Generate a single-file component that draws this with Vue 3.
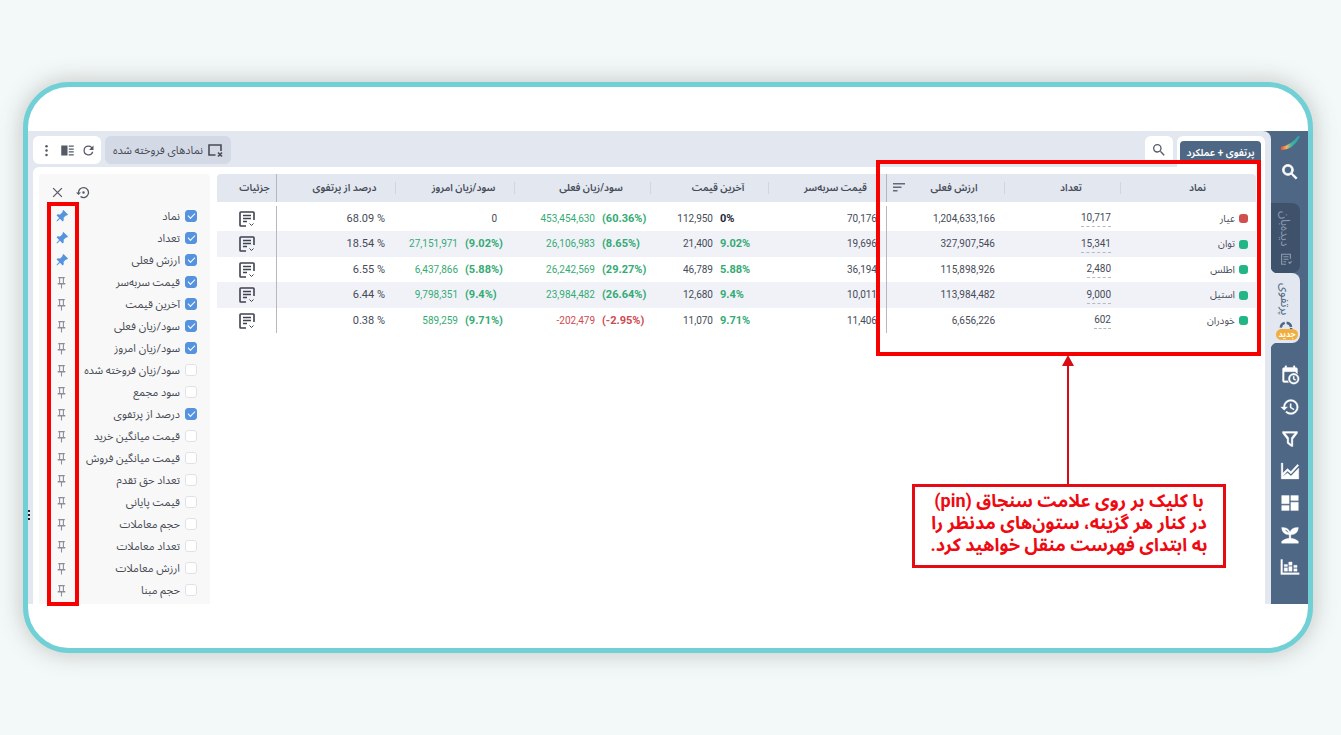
<script setup>
import { ref } from 'vue'

const columns = [
  { label: 'نماد', cls: 'c-symbol' },
  { label: 'تعداد', cls: 'c-count' },
  { label: 'ارزش فعلی', cls: 'c-value', sorted: true },
  { label: 'قیمت سربه‌سر', cls: 'c-even' },
  { label: 'آخرین قیمت', cls: 'c-last' },
  { label: 'سود/زیان فعلی', cls: 'c-profit' },
  { label: 'سود/زیان امروز', cls: 'c-today' },
  { label: 'درصد از پرتفوی', cls: 'c-share' },
  { label: 'جزئیات', cls: 'c-detail' }
]

const rows = [
  { name: 'عیار', dot: 'down', count: '10,717', value: '1,204,633,166', even: '70,176', last: '112,950', lastPct: '0%', lastTone: 'flat', profit: '453,454,630', profitPct: '(60.36%)', profitTone: 'up', today: '0', todayPct: '', todayTone: 'plain', share: '68.09 %' },
  { name: 'توان', dot: 'up', count: '15,341', value: '327,907,546', even: '19,696', last: '21,400', lastPct: '9.02%', lastTone: 'up', profit: '26,106,983', profitPct: '(8.65%)', profitTone: 'up', today: '27,151,971', todayPct: '(9.02%)', todayTone: 'up', share: '18.54 %' },
  { name: 'اطلس', dot: 'up', count: '2,480', value: '115,898,926', even: '36,194', last: '46,789', lastPct: '5.88%', lastTone: 'up', profit: '26,242,569', profitPct: '(29.27%)', profitTone: 'up', today: '6,437,866', todayPct: '(5.88%)', todayTone: 'up', share: '6.55 %' },
  { name: 'استیل', dot: 'up', count: '9,000', value: '113,984,482', even: '10,011', last: '12,680', lastPct: '9.4%', lastTone: 'up', profit: '23,984,482', profitPct: '(26.64%)', profitTone: 'up', today: '9,798,351', todayPct: '(9.4%)', todayTone: 'up', share: '6.44 %' },
  { name: 'خودران', dot: 'up', count: '602', value: '6,656,226', even: '11,406', last: '11,070', lastPct: '9.71%', lastTone: 'up', profit: '-202,479', profitPct: '(-2.95%)', profitTone: 'down', today: '589,259', todayPct: '(9.71%)', todayTone: 'up', share: '0.38 %' }
]

const options = ref([
  { label: 'نماد', on: true, pinned: true },
  { label: 'تعداد', on: true, pinned: true },
  { label: 'ارزش فعلی', on: true, pinned: true },
  { label: 'قیمت سربه‌سر', on: true, pinned: false },
  { label: 'آخرین قیمت', on: true, pinned: false },
  { label: 'سود/زیان فعلی', on: true, pinned: false },
  { label: 'سود/زیان امروز', on: true, pinned: false },
  { label: 'سود/زیان فروخته شده', on: false, pinned: false },
  { label: 'سود مجمع', on: false, pinned: false },
  { label: 'درصد از پرتفوی', on: true, pinned: false },
  { label: 'قیمت میانگین خرید', on: false, pinned: false },
  { label: 'قیمت میانگین فروش', on: false, pinned: false },
  { label: 'تعداد حق تقدم', on: false, pinned: false },
  { label: 'قیمت پایانی', on: false, pinned: false },
  { label: 'حجم معاملات', on: false, pinned: false },
  { label: 'تعداد معاملات', on: false, pinned: false },
  { label: 'ارزش معاملات', on: false, pinned: false },
  { label: 'حجم مبنا', on: false, pinned: false }
])

const tools = [
  { label: 'تقویم', d: 'M19 3h-1V1h-2v2H8V1H6v2H5C3.900 3 3 3.900 3 5v14c0 1.100.9 2 2 2h5.300a8 8 0 0 1-1.100-2H5V8h14v1.200c.7.300 1.400.600 2 1.100V5c0-1.100-.9-2-2-2zM16.500 10a6.500 6.500 0 1 0 0 13 6.500 6.500 0 0 0 0-13zm0 11a4.500 4.500 0 1 1 0-9 4.500 4.500 0 0 1 0 9zm.6-7.500h-1.400v3.500l2.600 1.600.7-1.100-1.900-1.200z' },
  { label: 'تاریخچه', d: 'M13 3a9 9 0 0 0-9 9H1l3.890 3.890.07.140L9 12H6c0-3.870 3.130-7 7-7s7 3.130 7 7-3.130 7-7 7c-1.930 0-3.680-.79-4.940-2.060l-1.420 1.420A8.954 8.954 0 0 0 13 21a9 9 0 0 0 0-18zm-1 5v5l4.280 2.540.72-1.210-3.500-2.080V8H12z' },
  { label: 'فیلتر', d: 'M3 3h18v2.200l-5.500 7V21h-2L8.500 17v-4.800L3 5.200zm3.200 2 4.300 5.600V16l3 2.500v-7.900L17.800 5z' },
  { label: 'نمودار', d: 'M1.500 2.500h2v12L9 9l4 3.500L21 4l1.500 1.300-9.300 10.200-4.200-3.500L3.500 18v.3L9 14.500l4.200 3.500L22.500 8.500v13h-21z' },
  { label: 'داشبورد', d: 'M2 3h9v10H2zM13 3h9v6h-9zM13 11h9v10h-9zM2 15h9v6H2z' },
  { label: 'رشد', d: 'M2 3c5.500-.3 9 2 10 5.500C13 5 16.500 2.700 22 3c-.2 5.300-3.300 8.500-9 8.700V16c3 .2 6 1.300 9 3.500V22H2v-2.500C5 17.300 8 16.200 11 16v-4.300C5.300 11.500 2.200 8.300 2 3zm4 2.300c1 2 2.500 3.300 4.500 4C9.800 7.300 8.300 6 6 5.300z' },
  { label: 'آمار', d: 'M1 3h2v16h20v2H1zM5 13h4v4H5zM5 9h4v2.500H5zM10.500 6h4v4h-4zM10.500 11.500h4v5.500h-4zM16.500 14h4v3h-4zM16.500 10h4v2.500h-4z' }
]
</script>

<template>
  <div class="page" dir="rtl">
    <div class="frame">
      <div class="app">
        <nav class="rail">
          <svg class="logo" viewBox="0 0 22 16" aria-hidden="true">
            <defs>
              <linearGradient id="swoosh" x1="0" y1="0" x2="1" y2="0">
                <stop offset="0" stop-color="#e5503c" />
                <stop offset=".3" stop-color="#f3b45c" />
                <stop offset=".55" stop-color="#3fb5a4" />
                <stop offset="1" stop-color="#27a0a8" />
              </linearGradient>
            </defs>
            <path d="M1 12Q12 11 20 0l2 1Q15 15 1 16z" fill="url(#swoosh)" />
          </svg>
          <button class="rail-btn search" aria-label="جستجو">
            <svg viewBox="0 0 24 24"><path d="M15.500 14h-.79l-.28-.27A6.470 6.470 0 0 0 16 9.500 6.500 6.500 0 1 0 9.500 16c1.610 0 3.090-.59 4.230-1.570l.27.280v.79l5 4.990L20.490 19zm-6 0a4.500 4.500 0 1 1 0-9 4.500 4.500 0 0 1 0 9z" stroke="#fff" stroke-width="1" /></svg>
          </button>
          <a class="rail-tab dark" href="#watch">
            <svg viewBox="0 0 20 20" fill="none" stroke="currentColor" stroke-width="1.800"><path d="M17 9V2H3v16h7M6 6h8M6 10h8M6 14h4M14 14l2 2.500 3-3" /></svg>
            <span>دیده‌بان</span>
          </a>
          <a class="rail-tab light" href="#portfolio">
            <svg viewBox="0 0 20 20" fill="none" stroke="currentColor" stroke-width="3.500"><circle cx="10" cy="10" r="7.500" stroke-dasharray="9 2.780" /></svg>
            <span>پرتفوی</span>
            <b class="badge">جدید</b>
          </a>
          <div class="rail-tools">
            <button v-for="t in tools" :key="t.label" class="rail-btn" :aria-label="t.label">
              <svg viewBox="0 0 24 24"><path :d="t.d" fill-rule="evenodd" stroke="#fff" stroke-width=".4" /></svg>
            </button>
          </div>
        </nav>

        <main class="main">
          <header class="bar">
            <div class="tab-wrap"><button class="tab">پرتفوی + عملکرد</button></div>
            <button class="find" aria-label="جستجو در جدول">
              <svg viewBox="0 0 24 24"><path d="M15.500 14h-.79l-.28-.27A6.470 6.470 0 0 0 16 9.500 6.500 6.500 0 1 0 9.500 16c1.610 0 3.090-.59 4.230-1.570l.27.280v.79l5 4.990L20.490 19zm-6 0a4.500 4.500 0 1 1 0-9 4.500 4.500 0 0 1 0 9z" /></svg>
            </button>
            <span class="grow"></span>
            <button class="sold">
              <svg viewBox="0 0 16 16" fill="none" stroke="currentColor" stroke-width="1.600"><path d="M8.500 13H2V3h12v6M11 10.500l4 4M15 10.500l-4 4" /></svg>
              <span>نمادهای فروخته شده</span>
            </button>
            <div class="group">
              <button aria-label="بازخوانی"><svg viewBox="0 0 24 24"><path d="M17.650 6.350A7.958 7.958 0 0 0 12 4a8 8 0 1 0 7.730 10h-2.080A6 6 0 1 1 12 6c1.660 0 3.140.69 4.220 1.780L13 11h7V4z" /></svg></button>
              <button aria-label="نما"><svg viewBox="0 0 24 24"><path d="M2 4h10v16H2zM14 4h8v2h-8zM14 8.700h8v2h-8zM14 13.300h8v2h-8zM14 18h8v2h-8z" /></svg></button>
              <button aria-label="بیشتر"><svg viewBox="0 0 24 24"><circle cx="12" cy="5" r="2" /><circle cx="12" cy="12" r="2" /><circle cx="12" cy="19" r="2" /></svg></button>
            </div>
          </header>

          <section class="panel">
            <div class="table-area">
              <table>
                <colgroup><col v-for="c in columns" :key="c.cls" :class="c.cls" /></colgroup>
                <thead>
                  <tr>
                    <th v-for="c in columns" :key="c.cls" :class="c.cls" scope="col">
                      <div class="head">
                        <span>{{ c.label }}</span>
                        <svg v-if="c.sorted" class="sort" viewBox="0 0 12 10"><path d="M0 1h12v1.500H0zM0 4.500h8.500V6H0zM0 8h4.500v1.500H0z" /></svg>
                      </div>
                    </th>
                  </tr>
                </thead>
                <tbody>
                  <tr v-for="r in rows" :key="r.name">
                    <td class="c-symbol"><span class="symbol"><i :class="r.dot"></i>{{ r.name }}</span></td>
                    <td class="c-count num"><span class="dotted">{{ r.count }}</span></td>
                    <td class="c-value num">{{ r.value }}</td>
                    <td class="c-even num">{{ r.even }}</td>
                    <td class="c-last"><div class="pair narrow"><span>{{ r.last }}</span><b :class="r.lastTone">{{ r.lastPct }}</b></div></td>
                    <td class="c-profit"><div class="pair" :class="r.profitTone"><span>{{ r.profit }}</span><b>{{ r.profitPct }}</b></div></td>
                    <td class="c-today"><div class="pair" :class="r.todayTone"><span>{{ r.today }}</span><b v-if="r.todayPct">{{ r.todayPct }}</b></div></td>
                    <td class="c-share num">{{ r.share }}</td>
                    <td class="c-detail">
                      <button class="detail" aria-label="جزئیات">
                        <svg viewBox="0 0 16 16" fill="none" stroke="currentColor" stroke-width="1.600"><path d="M15 9V1.800Q15 1 14.200 1H1.800Q1 1 1 1.800v12.400q0 .8.8.8H7M4 4.500h8M4 7.500h8M4 10.500h4" /><path d="M10.500 12.500l2 2 2-2" stroke-width="1" /></svg>
                      </button>
                    </td>
                  </tr>
                </tbody>
              </table>
            </div>

            <aside class="settings">
              <div class="settings-head">
                <button aria-label="بازنشانی"><svg viewBox="0 0 24 24"><path d="M14 12a2 2 0 1 0-4 0 2 2 0 0 0 4 0zm-2-9a9 9 0 0 0-9 9H0l4 4 4-4H5c0-3.870 3.130-7 7-7s7 3.130 7 7-3.130 7-7 7c-1.510 0-2.910-.49-4.060-1.300l-1.420 1.440A9 9 0 1 0 12 3z" /></svg></button>
                <button aria-label="بستن"><svg viewBox="0 0 24 24" fill="none" stroke="currentColor" stroke-width="2"><path d="M5 5l14 14M19 5L5 19" /></svg></button>
              </div>
              <ul>
                <li v-for="o in options" :key="o.label">
                  <label><input v-model="o.on" type="checkbox" /><span>{{ o.label }}</span></label>
                  <button class="pin" :class="{ on: o.pinned }" :aria-label="'سنجاق ' + o.label" @click="o.pinned = !o.pinned">
                    <svg v-if="o.pinned" viewBox="0 0 24 24"><path transform="rotate(45 12 12)" d="M16.500 11V4H18V1H6v3h1.500v7L4 14v3h7v6l1 2 1-2v-6h7v-3z" /></svg>
                    <svg v-else viewBox="0 0 24 24"><path d="M16.500 13V4H18V2H6v2h1.500v9H5v2.500h6V23h2v-7.500h6V13zm-7 0V4h5v9z" fill-rule="evenodd" /></svg>
                  </button>
                </li>
              </ul>
            </aside>
          </section>
          <span class="grip"><i></i><i></i><i></i></span>
        </main>

        <div class="mark mark-columns"></div>
        <div class="mark mark-pins"></div>
        <svg class="arrow" viewBox="0 0 12 130"><path d="M5 10h2v120H5z" /><path d="M6 0l6 11H0z" /></svg>
        <p class="note">با کلیک بر روی علامت سنجاق (pin)<br />در کنار هر گزینه، ستون‌های مدنظر را<br />به ابتدای فهرست منقل خواهید کرد.</p>
      </div>
    </div>
  </div>
</template>

<style>
body {
  margin: 0;
  background: #f3f8f8;
}
</style>

<style scoped>
.page {
  box-sizing: border-box;
  min-height: 100vh;
  padding: 82px 28px 82px 23px;
  background: #f3f8f8;
  font-family: Roboto, "Noto Sans Arabic", Vazirmatn, "DejaVu Sans", sans-serif;
  font-size: 11px;
  color: #464b57;
}
.page * { box-sizing: border-box; }
button {
  display: flex;
  align-items: center;
  justify-content: center;
  margin: 0;
  padding: 0;
  border: 0;
  background: none;
  color: inherit;
  font: inherit;
}
svg { display: block; fill: currentColor; }
svg[fill="none"] { fill: none; }
.frame {
  padding: 44px 0;
  border: 5px solid #70d0d5;
  border-radius: 46px;
  background: #fff;
  box-shadow: 0 0 24px rgba(80, 90, 80, .32);
}
.app {
  position: relative;
  display: flex;
  height: 473px;
  background: #4e6785;
}
.rail {
  display: flex;
  flex: none;
  flex-direction: column;
  align-items: flex-start;
  width: 37px;
  color: #fff;
}
.logo { width: 20px; height: 16px; margin: 4px 8px 0; }
.rail-btn { width: 36px; height: 32px; }
.rail-btn svg { width: 20px; height: 20px; }
.rail-btn.search { margin-top: 5px; }
.rail-tab {
  position: relative;
  display: flex;
  align-items: center;
  gap: 6px;
  align-self: flex-end;
  width: 29px;
  height: 70px;
  padding: 8px 0;
  border-radius: 0 8px 8px 0;
  writing-mode: vertical-rl;
  text-decoration: none;
  font-size: 12px;
}
.rail-tab svg { width: 14px; height: 14px; }
.rail-tab.dark { margin-top: 15px; background: #3f526b; color: #8c9bb0; }
.rail-tab.light { background: #e2e7f0; color: #4e6785; }
.rail-tab.light::before,
.rail-tab.light::after {
  content: "";
  position: absolute;
  left: 0;
  width: 7px;
  height: 7px;
}
.rail-tab.light::before { top: -7px; background: radial-gradient(circle at 7px 0, transparent 7px, #e2e7f0 8px); }
.rail-tab.light::after { bottom: -7px; background: radial-gradient(circle at 7px 7px, transparent 7px, #e2e7f0 8px); }
.badge {
  position: absolute;
  bottom: 3px;
  left: 5px;
  width: 22px;
  height: 11px;
  border-radius: 6px;
  background: #f2ae3d;
  color: #fff;
  font-size: 8px;
  line-height: 11px;
  text-align: center;
  writing-mode: horizontal-tb;
}
.rail-tools { margin-top: 16px; }
.main {
  position: relative;
  display: flex;
  flex: 1;
  flex-direction: column;
  min-width: 0;
  padding: 0 6px 0 5px;
  border-radius: 0 8px 0 0;
  background: #e2e7f0;
}
.bar {
  display: flex;
  align-items: flex-start;
  gap: 4px;
  height: 36px;
  padding-top: 5px;
}
.grow { flex: 1; }
.tab-wrap { height: 31px; padding: 5px 4px 0 3px; border-radius: 6px 6px 0 0; background: #fff; }
.tab {
  width: 81px;
  height: 22px;
  border-radius: 4px 4px 0 0;
  background: #4e6785;
  color: #fff;
  font-size: 10px;
  font-weight: 600;
  white-space: nowrap;
}
.find { width: 28px; height: 28px; border-radius: 6px; background: #fff; color: #555b66; }
.find svg { width: 16px; height: 16px; }
.sold {
  gap: 4px;
  width: 126px;
  height: 28px;
  border-radius: 6px;
  background: #d4dae5;
  white-space: nowrap;
}
.sold svg { width: 16px; height: 16px; }
.group { display: flex; align-items: center; height: 28px; padding: 0 2px 0 3px; border-radius: 6px; background: #fff; color: #555b66; }
.group button { width: 21px; height: 28px; }
.group svg { width: 15px; height: 15px; }
.panel {
  display: flex;
  flex: 1;
  gap: 7px;
  min-height: 0;
  padding: 7px 9px 0 6px;
  border-radius: 6px 0 0 0;
  background: #fff;
}
.table-area { flex: 1; min-width: 0; }
table { width: 100%; border-spacing: 0; table-layout: fixed; }
col.c-symbol { width: 135px; }
col.c-count { width: 116px; }
col.c-value, col.c-even, col.c-last { width: 118px; }
col.c-profit { width: 136px; }
col.c-today, col.c-share { width: 119px; }
col.c-detail { width: 60px; }
th {
  height: 28px;
  padding: 0 0 0 16px;
  background-color: #e2e7f0;
  font-size: 10px;
  font-weight: 600;
  white-space: nowrap;
}
th:first-child { padding-left: 18px; border-radius: 0 4px 0 0; }
th:last-child { border-radius: 4px 0 0 0; }
.head { position: relative; line-height: 14px; }
th + th { padding: 0; background-image: linear-gradient(#d0d5de, #d0d5de); background-size: 1px 12px; background-position: right center; background-repeat: no-repeat; }
th + th .head { left: 0; margin: 0 -8px 0 8px; }
th.c-even, th.c-detail { background-image: none; }
.sort { position: absolute; left: -2px; top: 1px; width: 12px; height: 10px; color: #626978; }
th.c-even, td.c-even, th.c-detail, td.c-detail { border-right: 1px solid #b4b8c1; }
tbody::before { content: ""; display: table-row; height: 4px; }
td { height: 25px; padding: 0 10px; white-space: nowrap; font-size: 10px; line-height: 14px; }
tbody tr:nth-child(even) td { height: 26px; background: #f1f2f8; }
.num { direction: ltr; text-align: right; }
td.c-share { padding-right: 11px; font-size: 11px; }
.symbol { display: flex; align-items: center; gap: 4px; }
.symbol i { width: 9px; height: 9px; border-radius: 3px; }
i.up { background: #23b585; }
i.down { background: #d05050; }
td.c-symbol { padding-right: 8px; }
.dotted { display: inline-block; border-bottom: 1px dashed #b4b8c0; line-height: 16px; }
.pair { display: flex; align-items: baseline; justify-content: flex-end; direction: ltr; gap: 7px; }
.pair b { width: 44px; text-align: left; font-size: 11px; }
.pair.narrow b { width: 39px; }
td.c-profit { padding: 0 5px 0 0; }
td.c-today { padding: 0 6px 0 0; }
.plain { padding-right: 12px; }
.up { color: #35ab74; }
.down { color: #cc4a50; }
.flat { color: #25293a; }
td.c-detail { padding: 0; }
.detail { width: 100%; height: 20px; color: #3f4350; }
.detail svg { width: 16px; height: 16px; }
.settings { flex: none; width: 171px; border-radius: 4px 4px 0 0; background: #f8f8f8; color: #474b55; }
.settings-head { display: flex; justify-content: flex-end; gap: 10px; padding: 10px 10px 4px; height: 31px; color: #555b66; }
.settings-head button { width: 16px; height: 16px; }
.settings-head svg { width: 15px; height: 15px; }
ul { margin: 0; padding: 0; list-style: none; }
li { display: flex; align-items: center; justify-content: space-between; height: 22px; padding: 0 13px 0 14px; }
label { display: flex; align-items: center; gap: 5px; white-space: nowrap; }
input {
  flex: none;
  width: 12px;
  height: 12px;
  margin: 0;
  border: 1px solid #e0e2e6;
  border-radius: 3px;
  background: #fff;
  appearance: none;
}
input:checked {
  border-color: #5593df;
  background: #5593df;
}
input:checked::before {
  content: "";
  display: block;
  width: 6px;
  height: 3px;
  margin: 2px auto 0;
  border: solid #fff;
  border-width: 0 0 1px 1px;
  transform: rotate(-45deg);
}
.pin { flex: none; width: 16px; height: 16px; color: #8b8f98; }
.pin.on { color: #5593df; }
.pin svg { width: 13px; height: 13px; }
.grip { position: absolute; left: 0; top: 379px; display: grid; gap: 2px; }
.grip i { width: 2px; height: 2px; background: #222; }
.mark { position: absolute; border: 4px solid #f60000; pointer-events: none; }
.mark-columns { top: 29px; right: 47px; width: 385px; height: 196px; }
.mark-pins { top: 71px; left: 19px; width: 32px; height: 404px; }
.arrow { position: absolute; top: 224px; right: 234px; width: 12px; height: 130px; fill: #d70c14; }
.note {
  position: absolute;
  top: 353px;
  right: 82px;
  width: 314px;
  height: 84px;
  margin: 0;
  padding-top: 3px;
  border: 3px solid #e60b12;
  background: #fff;
  color: #ee0a10;
  font-size: 18px;
  font-weight: 700;
  line-height: 22px;
  text-align: center;
  white-space: nowrap;
}
</style>
